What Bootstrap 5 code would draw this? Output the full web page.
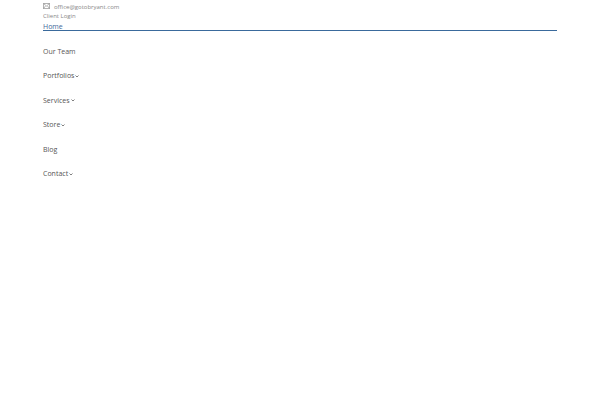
<!DOCTYPE html>
<html lang="en">
<head>
<meta charset="utf-8">
<meta name="viewport" content="width=device-width, initial-scale=1">
<title>Home</title>
<link href="https://cdn.jsdelivr.net/npm/bootstrap@5.3.0/dist/css/bootstrap.min.css" rel="stylesheet">
<style>
body { font-family: "Open Sans", sans-serif; background: #fff; }
.page-wrap { padding: 3px 43px 0; }
.top-info { font-size: 6px; line-height: 9px; color: #888; padding-bottom: 2px; }
.top-info a { color: inherit; text-decoration: none; }
.mail-icon { width: 7px; height: 6px; margin-right: 4px; }
.main-menu { font-size: 7px; line-height: 7px; min-height: 155px; }
.main-menu .nav-link { color: #555; padding: 0; border-bottom: 1px solid transparent; transition: none; }
.main-menu .nav-link.active { color: #3f6a9a; border-color: #3a6a9c; }
.caret-icon { display: inline-block; width: 4px; height: 3px; margin-left: 1px; }
</style>
</head>
<body>
<div class="page-wrap">
<header class="top-info">
<div class="d-flex align-items-start"><svg class="mail-icon" viewBox="0 0 14 12" fill="none" stroke="#666" aria-hidden="true"><path d="M1 1h12v10H1zM1 1l6 5 6-5M1 11l4-5M13 11l-4-5"/></svg><a href="mailto:office@gotobryant.com">office@gotobryant.com</a></div>
<div><a href="#">Client Login</a></div>
</header>
<nav aria-label="Main">
<ul class="nav flex-column justify-content-between mb-0 main-menu">
<li><a class="nav-link active" href="#" aria-current="page">Home</a></li>
<li><a class="nav-link" href="#">Our Team</a></li>
<li><a class="nav-link" href="#">Portfolios<svg class="caret-icon" viewBox="0 0 8 6" fill="none" stroke="currentColor" stroke-width="1.5" aria-hidden="true"><path d="M1 1l3 3 3-3"/></svg></a></li>
<li><a class="nav-link" href="#">Services<svg class="caret-icon" viewBox="0 0 8 6" fill="none" stroke="currentColor" stroke-width="1.5" aria-hidden="true"><path d="M1 1l3 3 3-3"/></svg></a></li>
<li><a class="nav-link" href="#">Store<svg class="caret-icon" viewBox="0 0 8 6" fill="none" stroke="currentColor" stroke-width="1.5" aria-hidden="true"><path d="M1 1l3 3 3-3"/></svg></a></li>
<li><a class="nav-link" href="#">Blog</a></li>
<li><a class="nav-link" href="#">Contact<svg class="caret-icon" viewBox="0 0 8 6" fill="none" stroke="currentColor" stroke-width="1.5" aria-hidden="true"><path d="M1 1l3 3 3-3"/></svg></a></li>
</ul>
</nav>
</div>
<script src="https://cdn.jsdelivr.net/npm/bootstrap@5.3.0/dist/js/bootstrap.bundle.min.js"></script>
</body>
</html>
